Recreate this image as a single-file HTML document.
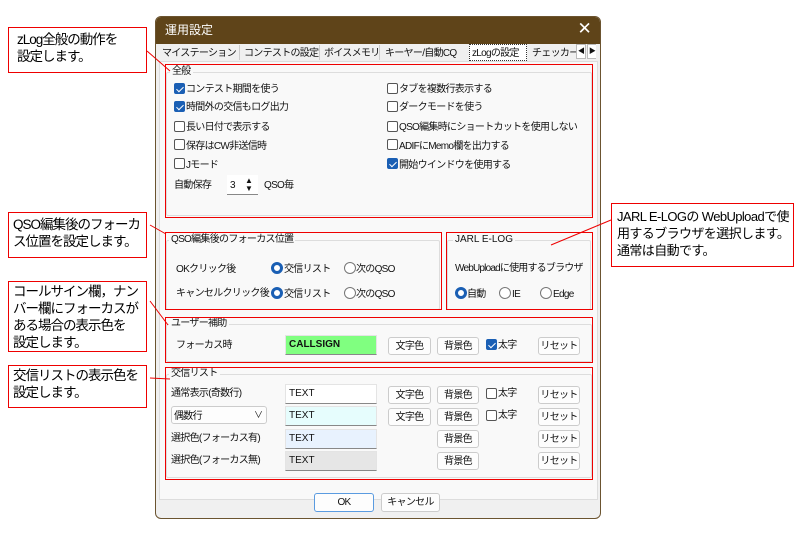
<!DOCTYPE html>
<html><head><meta charset="utf-8"><style>
*{box-sizing:border-box;margin:0;padding:0;white-space:nowrap}
body{width:801px;height:538px;background:#fff;position:relative;overflow:hidden;font-family:"Liberation Sans","Noto Sans CJK JP",sans-serif;font-size:10px;letter-spacing:-0.7px;color:#111}
.a{position:absolute}
.note{position:absolute;border:1.5px solid #e00;background:#fff;font-size:13.5px;letter-spacing:-1px;line-height:17px;padding:3px 0 0 8px;color:#000}
.red{position:absolute;border:1.5px solid #e00}
.gb{position:absolute;border:1px solid #ddd;border-radius:2px}
.lg{position:absolute;background:#f9f9f9;padding:0 2px;line-height:12px}
.cb{position:absolute;width:11px;height:11px;border:1px solid #555;border-radius:2px;background:#fff}
.cb.on{background:#1a5fb4;border-color:#1a5fb4}
.cb.on::after{content:"";position:absolute;left:3px;top:1px;width:3px;height:6px;border:solid #fff;border-width:0 1.5px 1.5px 0;transform:rotate(45deg)}
.rb{position:absolute;width:12px;height:12px;border:1px solid #777;border-radius:50%;background:#fff}
.rb.on{border:3.5px solid #1a5fb4}
.btn{position:absolute;height:18px;border:1px solid #ccc;border-radius:3px;background:#fdfdfd;text-align:center;line-height:18px}
.tb{position:absolute;height:20px;border:1px solid #e4e4e4;border-bottom:1.5px solid #888;padding-left:3px;line-height:17px;letter-spacing:0}
.t{position:absolute;line-height:13px;padding-top:1px}
svg{position:absolute;left:0;top:0}
</style></head><body>
<div class="a" style="left:155px;top:16px;width:446px;height:503px;background:#f0f0f0;border:1px solid #6b5430;border-radius:6px;overflow:hidden">
 <div class="a" style="left:0;top:0;width:446px;height:27px;background:#5f4419;color:#fff;font-size:12px;letter-spacing:0;line-height:27px;padding-left:9px">運用設定</div>
 <div class="a" style="right:9px;top:2px;color:#fff;font-size:17px">✕</div>
 <div class="a" style="left:3px;top:44px;width:439px;height:439px;background:#f9f9f9;border:1px solid #ddd"></div>
</div>
<!-- tabs -->
<div class="a" style="left:158px;top:44px;width:438px;height:18px;overflow:hidden">
 <div class="t" style="left:4px;top:2px">マイステーション</div>
 <div class="a" style="left:81px;top:1px;width:1px;height:15px;background:#ccc"></div>
 <div class="t" style="left:86px;top:2px">コンテストの設定</div>
 <div class="a" style="left:161px;top:1px;width:1px;height:15px;background:#ccc"></div>
 <div class="t" style="left:166px;top:2px">ボイスメモリ</div>
 <div class="a" style="left:221px;top:1px;width:1px;height:15px;background:#ccc"></div>
 <div class="t" style="left:227px;top:2px">キーヤー/自動CQ</div>
 <div class="a" style="left:311px;top:0;width:58px;height:17px;border:1px dotted #333;background:#fff"></div>
 <div class="t" style="left:314px;top:2px">zLogの設定</div>
 <div class="a" style="left:372px;top:0;width:46px;height:17px;overflow:hidden"><div class="t" style="left:2px;top:2px">チェッカー</div></div>
 <div class="a" style="left:418px;top:0;width:10px;height:15px;border:1px solid #bbb;background:#fff;font-size:7px;text-align:center;line-height:13px">◀</div>
 <div class="a" style="left:429px;top:0;width:10px;height:15px;border:1px solid #bbb;background:#fff;font-size:7px;text-align:center;line-height:13px">▶</div>
</div>

<!-- 全般 -->
<div class="gb" style="left:166px;top:72px;width:426px;height:144px"></div>
<div class="lg" style="left:170px;top:66px">全般</div>
<div class="cb on" style="left:174px;top:83px"></div><div class="t" style="left:186px;top:82px">コンテスト期間を使う</div>
<div class="cb on" style="left:174px;top:101px"></div><div class="t" style="left:186px;top:100px">時間外の交信もログ出力</div>
<div class="cb" style="left:174px;top:121px"></div><div class="t" style="left:186px;top:120px">長い日付で表示する</div>
<div class="cb" style="left:174px;top:139px"></div><div class="t" style="left:186px;top:139px">保存はCW非送信時</div>
<div class="cb" style="left:174px;top:158px"></div><div class="t" style="left:186px;top:158px">Jモード</div>
<div class="t" style="left:174px;top:178px">自動保存</div>
<div class="a" style="left:227px;top:175px;width:31px;height:20px;background:#fff;border-bottom:1px solid #888"></div>
<div class="t" style="left:230px;top:178px">3</div>
<div class="t" style="left:245px;top:176px;font-size:8px;line-height:8px">▲<br>▼</div>
<div class="t" style="left:264px;top:178px">QSO毎</div>
<div class="cb" style="left:387px;top:83px"></div><div class="t" style="left:399px;top:82px">タブを複数行表示する</div>
<div class="cb" style="left:387px;top:101px"></div><div class="t" style="left:399px;top:100px">ダークモードを使う</div>
<div class="cb" style="left:387px;top:121px"></div><div class="t" style="left:399px;top:120px">QSO編集時にショートカットを使用しない</div>
<div class="cb" style="left:387px;top:139px"></div><div class="t" style="left:399px;top:139px">ADIFにMemo欄を出力する</div>
<div class="cb on" style="left:387px;top:158px"></div><div class="t" style="left:399px;top:158px">開始ウインドウを使用する</div>

<!-- QSO focus -->
<div class="gb" style="left:166px;top:240px;width:274px;height:70px"></div>
<div class="lg" style="left:169px;top:234px">QSO編集後のフォーカス位置</div>
<div class="t" style="left:176px;top:262px">OKクリック後</div>
<div class="rb on" style="left:271px;top:262px"></div><div class="t" style="left:284px;top:262px">交信リスト</div>
<div class="rb" style="left:344px;top:262px"></div><div class="t" style="left:356px;top:262px">次のQSO</div>
<div class="t" style="left:176px;top:286px">キャンセルクリック後</div>
<div class="rb on" style="left:271px;top:287px"></div><div class="t" style="left:284px;top:287px">交信リスト</div>
<div class="rb" style="left:344px;top:287px"></div><div class="t" style="left:356px;top:287px">次のQSO</div>
<!-- JARL -->
<div class="gb" style="left:447px;top:240px;width:144px;height:70px"></div>
<div class="lg" style="left:453px;top:234px;letter-spacing:0">JARL E-LOG</div>
<div class="t" style="left:455px;top:261px;letter-spacing:-0.8px">WebUploadに使用するブラウザ</div>
<div class="rb on" style="left:455px;top:287px"></div><div class="t" style="left:467px;top:287px">自動</div>
<div class="rb" style="left:499px;top:287px"></div><div class="t" style="left:512px;top:287px">IE</div>
<div class="rb" style="left:540px;top:287px"></div><div class="t" style="left:553px;top:287px">Edge</div>

<!-- ユーザー補助 -->
<div class="gb" style="left:166px;top:324px;width:426px;height:38px"></div>
<div class="lg" style="left:169px;top:318px">ユーザー補助</div>
<div class="t" style="left:176px;top:338px">フォーカス時</div>
<div class="tb" style="left:285px;top:335px;width:92px;background:#80ff80;font-weight:bold;font-size:10px">CALLSIGN</div>
<div class="btn" style="left:388px;top:337px;width:43px">文字色</div>
<div class="btn" style="left:437px;top:337px;width:42px">背景色</div>
<div class="cb on" style="left:486px;top:339px"></div><div class="t" style="left:498px;top:338px">太字</div>
<div class="btn" style="left:538px;top:337px;width:42px">リセット</div>

<!-- 交信リスト -->
<div class="gb" style="left:166px;top:374px;width:426px;height:104px"></div>
<div class="lg" style="left:169px;top:368px">交信リスト</div>
<div class="t" style="left:171px;top:386px">通常表示(奇数行)</div>
<div class="tb" style="left:285px;top:384px;width:92px;background:#fff">TEXT</div>
<div class="btn" style="left:388px;top:386px;width:43px">文字色</div>
<div class="btn" style="left:437px;top:386px;width:42px">背景色</div>
<div class="cb" style="left:486px;top:388px"></div><div class="t" style="left:498px;top:386px">太字</div>
<div class="btn" style="left:538px;top:386px;width:42px">リセット</div>
<div class="a" style="left:171px;top:406px;width:96px;height:18px;border:1px solid #ccc;border-radius:3px;background:#fdfdfd"></div>
<div class="t" style="left:174px;top:409px">偶数行</div><div class="t" style="left:254px;top:408px;font-size:9px">∨</div>
<div class="tb" style="left:285px;top:406px;width:92px;background:#e6fdfd">TEXT</div>
<div class="btn" style="left:388px;top:408px;width:43px">文字色</div>
<div class="btn" style="left:437px;top:408px;width:42px">背景色</div>
<div class="cb" style="left:486px;top:410px"></div><div class="t" style="left:498px;top:408px">太字</div>
<div class="btn" style="left:538px;top:408px;width:42px">リセット</div>
<div class="t" style="left:171px;top:431px">選択色(フォーカス有)</div>
<div class="tb" style="left:285px;top:429px;width:92px;background:#e8f2fe">TEXT</div>
<div class="btn" style="left:437px;top:430px;width:42px">背景色</div>
<div class="btn" style="left:538px;top:430px;width:42px">リセット</div>
<div class="t" style="left:171px;top:453px">選択色(フォーカス無)</div>
<div class="tb" style="left:285px;top:451px;width:92px;background:#e6e6e6">TEXT</div>
<div class="btn" style="left:437px;top:452px;width:42px">背景色</div>
<div class="btn" style="left:538px;top:452px;width:42px">リセット</div>

<div class="btn" style="left:314px;top:493px;width:60px;height:19px;border:1.5px solid #5a9be0">OK</div>
<div class="btn" style="left:381px;top:493px;width:59px;height:19px">キャンセル</div>

<!-- red boxes -->
<div class="red" style="left:165px;top:64px;width:428px;height:154px"></div>
<div class="red" style="left:165px;top:232px;width:277px;height:78px"></div>
<div class="red" style="left:446px;top:232px;width:147px;height:78px"></div>
<div class="red" style="left:165px;top:317px;width:428px;height:46px"></div>
<div class="red" style="left:165px;top:367px;width:428px;height:113px"></div>

<!-- notes -->
<div class="note" style="left:8px;top:27px;width:139px;height:46px">zLog全般の動作を<br>設定します。</div>
<div class="note" style="left:8px;top:212px;width:139px;height:46px;padding-left:4px">QSO編集後のフォーカ<br>ス位置を設定します。</div>
<div class="note" style="left:8px;top:281px;width:139px;height:71px;padding-left:4px;padding-top:1px">コールサイン欄，ナン<br>バー欄にフォーカスが<br>ある場合の表示色を<br>設定します。</div>
<div class="note" style="left:8px;top:365px;width:139px;height:43px;padding-left:4px;padding-top:1px;overflow:hidden">交信リストの表示色を<br>設定します。</div>
<div class="note" style="left:611px;top:203px;width:183px;height:64px;padding-left:5px;padding-top:4px;font-size:13px;letter-spacing:-0.6px">JARL E-LOGの WebUploadで使<br>用するブラウザを選択します。<br>通常は自動です。</div>
<svg width="801" height="538"><g stroke="#e00" stroke-width="1" fill="none">
<line x1="147" y1="51" x2="170" y2="71"/>
<line x1="150" y1="225" x2="166" y2="234"/>
<line x1="150" y1="301" x2="168" y2="325"/>
<line x1="150" y1="378" x2="170" y2="379"/>
<line x1="611" y1="220" x2="551" y2="245"/>
</g></svg>
</body></html>
